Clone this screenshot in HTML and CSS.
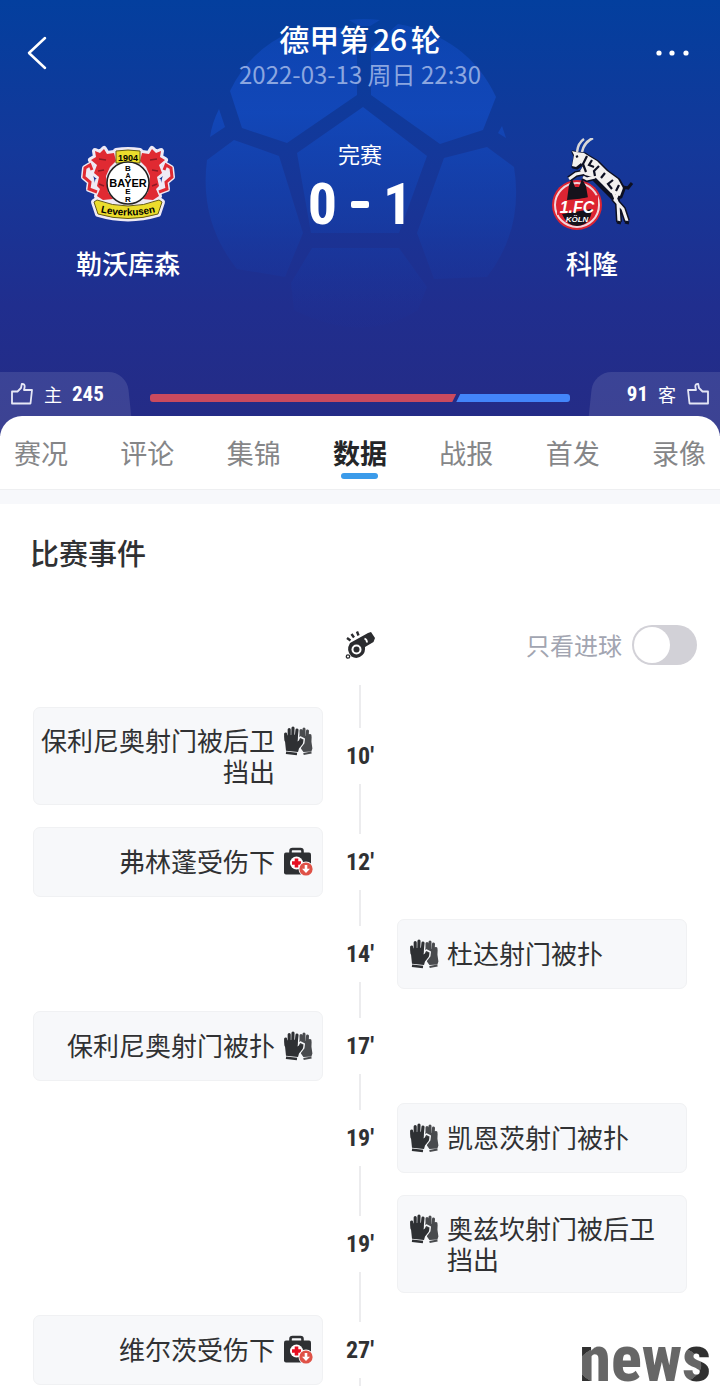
FILE: index.html
```html
<!DOCTYPE html>
<html lang="zh-CN">
<head>
    <meta charset="UTF-8">
    <meta name="viewport" content="width=device-width, initial-scale=1.0">
    <title>勒沃库森 0-1 科隆</title>
    <link rel="stylesheet" href="styles.css">
</head>
<body>
    <!-- 图标定义 -->
    <svg class="defs" aria-hidden="true">
        <symbol id="gloves" viewBox="0 0 30 30">
            <g fill="none" stroke="#494b4e" stroke-linecap="round" stroke-width="3">
                <path d="M18 14V5M21 14V3.500M24 14l.5-8.500M26.500 17l.5-7"/>
            </g>
            <path fill="#494b4e" d="M16.500 10l11.900 1v5l1 7-1 3-8 .5-3.500-5z"/>
            <path fill="none" stroke="#494b4e" stroke-width="2.200" d="M20.500 28.500l8-1.500"/>
            <path fill="none" stroke="#f7f8fa" stroke-width="1.400" stroke-linejoin="round" d="M15.800 13l1.500-1.500 4 2-.5 4-3.500 4.500-.5 3"/>
            <g fill="none" stroke="#2e3033" stroke-linecap="round" stroke-width="3.100">
                <path d="M3 15L2.600 8.500M6.200 14V4M9.700 14l.3-11.500M13 14l1-9.500M13.500 20l5-4.500"/>
            </g>
            <path fill="#2e3033" d="M1.400 10l13.200-1v7l2.400-2 3 2-.4 2.500-3.600 4.500-1 3.500-12-1.200z"/>
            <path fill="none" stroke="#2e3033" stroke-width="2.400" d="M3 27.200l11 1.300"/>
        </symbol>
        <symbol id="injury" viewBox="0 0 30 30">
            <path fill="none" stroke="#2e3033" stroke-width="2.600" d="M7.500 7V4.500q0-2 2-2h8q2 0 2 2V7"/>
            <rect x="1" y="6" width="27" height="22" rx="2" fill="#2e3033"/>
            <circle cx="13.500" cy="16.500" r="6.500" fill="#fff"/>
            <path stroke="#e60f22" stroke-width="3.600" d="M13.500 12v9M9 16.500h9"/>
            <circle cx="23" cy="22.500" r="7.500" fill="#f7f8fa"/>
            <circle cx="23" cy="22.500" r="6.600" fill="#df5247"/>
            <path fill="#fff" d="M21.700 18.500h2.600v3.700h2.700L23 26.500l-4-4.300h2.700z"/>
        </symbol>
        <symbol id="thumb" viewBox="0 0 24 24">
            <path fill="none" stroke="#e4e6f5" stroke-width="1.800" stroke-linejoin="round" d="M2 9.500h5.500L11 6l.8-4q3-.3 2.900 2.700L14 8h8l-1.500 13.500H2z"/>
        </symbol>
    </svg>

    <header class="match">
        <svg class="ball" viewBox="0 0 320 320" aria-hidden="true">
            <defs>
                <linearGradient id="ballFill" gradientUnits="userSpaceOnUse" x1="0" y1="20" x2="0" y2="330">
                    <stop offset="0" stop-color="#124dc6" stop-opacity=".45"/>
                    <stop offset=".3" stop-color="#124abf" stop-opacity=".8"/>
                    <stop offset=".65" stop-color="#1540ac" stop-opacity=".55"/>
                    <stop offset="1" stop-color="#1c3098" stop-opacity=".1"/>
                </linearGradient>
            </defs>
            <g fill="url(#ballFill)" transform="translate(-201 -16)">
                <path d="M349 20q15-2 31 0l-10 6h-11z"/>
                <path d="M230 91q20-42 63-60l50-3 14 20v47l-70 48-45-15z"/>
                <path d="M371 95V48l27-24q70 13 98 73l-13 33-43 14z"/>
                <path d="M363 107l64 49-28 77h-88l-14-80z"/>
                <path d="M234 140l45 16 24 77-18 44-48-8q-38-47-30-109z"/>
                <path d="M487 147l27 20q10 62-27 110l-53 2-17-46 27-75z"/>
                <path d="M312 248h87l28 39-9 23q-55 35-124 0l-3-27z"/>
                <path d="M219 109l6 18-15 10q2-14 9-28zM502 126l4 12-8-5z"/>
            </g>
        </svg>

        <div class="topbar">
            <button class="icon-btn" aria-label="返回">
                <svg width="22" height="34" viewBox="0 0 22 34"><path d="M19 2L3 17l16 15" fill="none" stroke="#fff" stroke-width="2.500" stroke-linecap="round" stroke-linejoin="round"/></svg>
            </button>
            <div class="round">
                <h1>德甲第26轮</h1>
                <p>2022-03-13 周日 22:30</p>
            </div>
            <button class="icon-btn more" aria-label="更多">
                <svg width="38" height="8" viewBox="0 0 38 8" fill="#fff"><circle cx="3" cy="4" r="2.600"/><circle cx="16" cy="4" r="2.600"/><circle cx="30" cy="4" r="2.600"/></svg>
            </button>
        </div>

        <div class="teams">
            <div class="team">
                <svg width="96" height="92" viewBox="0 0 96 92" aria-hidden="true">
                    <defs>
                        <path id="lion" d="M34 15l-7 1-3-5-4 4-5-2 1 6-5 3 6 5-3 8 5 4-2 9 3 3-3 7 6 4 10-1-5-7-1-8-1-8 4-9 6-6z"/>
                        <path id="tail" d="M17 54l-8-3 1-7-6-5 1-9 5-3 2 5"/>
                        <path id="ribbon" d="M17 62q31 12 62 0l3 2-4 12q-30 9-60 0l-4-12z"/>
                        <path id="ribbonLine" d="M16 73q32 9 64 0"/>
                    </defs>
                    <!-- 白色描边 -->
                    <g fill="#efeaf5" stroke="#efeaf5" stroke-width="6" stroke-linejoin="round">
                        <use href="#lion"/>
                        <use href="#lion" transform="translate(96 0) scale(-1 1)"/>
                        <use href="#tail"/>
                        <use href="#tail" transform="translate(96 0) scale(-1 1)"/>
                        <use href="#ribbon"/>
                        <path d="M36 13q12-2 24 0v50H36z"/>
                    </g>
                    <g fill="#e02a32">
                        <use href="#lion"/>
                        <use href="#lion" transform="translate(96 0) scale(-1 1)"/>
                    </g>
                    <g fill="none" stroke="#e02a32" stroke-width="3">
                        <use href="#tail"/>
                        <use href="#tail" transform="translate(96 0) scale(-1 1)"/>
                    </g>
                    <path d="M19 21l7 1M18 33l6-1M19 46l5 2M77 21l-7 1M78 33l-6-1M77 46l-5 2" stroke="#8e1a24" stroke-width="1.500"/>
                    <path d="M36 13q12-2 24 0v12H36z" fill="#ecdd2c" stroke="#665c13"/>
                    <use href="#ribbon" fill="#ecdd2c" stroke="#665c13"/>
                    <circle cx="48" cy="45" r="21" fill="#fff" stroke="#222" stroke-width="1.500"/>
                    <g class="crest-text">
                        <text x="48" y="23" font-size="9">1904</text>
                        <text x="48" y="33" font-size="8">B</text>
                        <text x="48" y="40" font-size="7">A</text>
                        <text x="48" y="49" font-size="11">BAYER</text>
                        <text x="48" y="56" font-size="8">E</text>
                        <text x="48" y="64" font-size="8">R</text>
                        <text font-size="10"><textPath href="#ribbonLine" startOffset="50%">Leverkusen</textPath></text>
                    </g>
                </svg>
                <h2>勒沃库森</h2>
            </div>
            <div class="result">
                <p>完赛</p>
                <div class="score"><span>0</span><span class="dash"></span><span>1</span></div>
            </div>
            <div class="team">
                <svg width="84" height="92" viewBox="0 0 84 92" aria-hidden="true">
                    <defs>
                        <path id="goatBody" d="M26 14l-4-1 2 4-2 11 4 1 5-4 2 3-3 5 5 4 11 3 6 6 9 9 9 3 3-8-5-9-11-8-10-10-10-6-3-2z"/>
                        <path id="goatLegs" d="M36 34l-10 2-7 5M45 39l-8 2-4-2M69 53l-4 9 8 9 4 12M62 52l6 14 1 18"/>
                    </defs>
                    <circle cx="27" cy="67" r="25" fill="#dd2432"/>
                    <circle cx="27" cy="67" r="22" fill="none" stroke="#f2d5dc" stroke-width="2"/>
                    <path d="M17 62l2-15 3-6 3 8h4l3-8 4 7 2 12zM12 76l30-5q-1 16-15 17-10 0-15-12z" fill="#15121b"/>
                    <path d="M7 66l41-9v11L7 77z" fill="#dd2432"/>
                    <g fill="#0d1022" stroke="#0d1022" stroke-width="3" stroke-linejoin="round">
                        <use href="#goatBody" x="1" y="1"/>
                        <path d="M44 42l15 4 11 12-3 7z"/>
                    </g>
                    <use href="#goatLegs" fill="none" stroke="#0d1022" stroke-width="6"/>
                    <use href="#goatBody" fill="#f3f1ef"/>
                    <use href="#goatLegs" fill="none" stroke="#f3f1ef" stroke-width="3"/>
                    <path d="M27 14Q28 5 34 1M32 14Q34 4 43 0" fill="none" stroke="#d9d7d7" stroke-width="2.500"/>
                    <path d="M37 18l-4 8 3 8M42 22l-3 5 5 2M49 28l-5 5 1 5M55 35l-4 5M63 42l-5 4 4 5M69 47l-3 6M28 18l-2 1" fill="none" stroke="#0d1022" stroke-width="2.200"/>
                    <path d="M73 49l5 1 4-5" fill="none" stroke="#0d1022" stroke-width="3"/>
                    <path d="M67 84l4 1M75 84l4 1" stroke="#0d1022" stroke-width="3"/>
                    <g class="koln-text">
                        <text x="27" y="75" font-size="16">1.FC</text>
                        <text x="27" y="84" font-size="8">KÖLN</text>
                    </g>
                </svg>
                <h2>科隆</h2>
            </div>
        </div>

        <div class="votes">
            <button class="vote home">
                <svg width="24" height="24"><use href="#thumb"/></svg>
                <span>主</span><b>245</b>
            </button>
            <div class="vote-bar">
                <div class="bar-home" style="flex-grow: 245"></div>
                <div class="bar-away" style="flex-grow: 91"></div>
            </div>
            <button class="vote away">
                <b>91</b><span>客</span>
                <svg class="flip" width="24" height="24"><use href="#thumb"/></svg>
            </button>
        </div>
    </header>

    <nav class="tabs">
        <a href="#">赛况</a>
        <a href="#">评论</a>
        <a href="#">集锦</a>
        <a href="#" class="active">数据</a>
        <a href="#">战报</a>
        <a href="#">首发</a>
        <a href="#">录像</a>
    </nav>

    <main class="events">
        <h2>比赛事件</h2>
        <div class="events-head">
            <svg class="whistle" width="30" height="30" viewBox="0 0 30 30" aria-hidden="true">
                <path d="M5 13L23 3l3-1 4 6-1.500 4-8.500 5q.5 5-2.500 8-5 5-11 1.500-6-6-1.500-13.500z" fill="#2b2c2f"/>
                <circle cx="11.500" cy="19.500" r="5" fill="#fff"/>
                <circle cx="11.500" cy="19.500" r="3" fill="#2b2c2f"/>
                <path d="M19.500 8.500q2.500 1 2.500 4" fill="none" stroke="#fff" stroke-width="1.800"/>
                <circle cx="3" cy="26.500" r="1.700" fill="#fff" stroke="#2b2c2f" stroke-width="1.300"/>
                <path d="M2 8l3.500 2.500M6.500 4l2.500 3.500M12 1.500l1.500 4" stroke="#2b2c2f" stroke-width="2.400"/>
            </svg>
            <label class="only-goals">只看进球 <input type="checkbox" role="switch"></label>
        </div>

        <ol class="timeline">
            <li class="home">
                <div class="card"><div class="event"><svg><use href="#gloves"/></svg><p>保利尼奥射门被后卫挡出</p></div></div>
                <time>10′</time>
            </li>
            <li class="home">
                <div class="card"><div class="event"><svg><use href="#injury"/></svg><p>弗林蓬受伤下</p></div></div>
                <time>12′</time>
            </li>
            <li class="away">
                <time>14′</time>
                <div class="card"><div class="event"><svg><use href="#gloves"/></svg><p>杜达射门被扑</p></div></div>
            </li>
            <li class="home">
                <div class="card"><div class="event"><svg><use href="#gloves"/></svg><p>保利尼奥射门被扑</p></div></div>
                <time>17′</time>
            </li>
            <li class="away">
                <time>19′</time>
                <div class="card"><div class="event"><svg><use href="#gloves"/></svg><p>凯恩茨射门被扑</p></div></div>
            </li>
            <li class="away">
                <time>19′</time>
                <div class="card"><div class="event"><svg><use href="#gloves"/></svg><p>奥兹坎射门被后卫挡出</p></div></div>
            </li>
            <li class="home">
                <div class="card"><div class="event"><svg><use href="#injury"/></svg><p>维尔茨受伤下</p></div></div>
                <time>27′</time>
            </li>
        </ol>
    </main>

    <div class="watermark">news</div>
</body>
</html>
```

FILE: styles.css
```css
* {
    box-sizing: border-box;
}
body {
    position: relative;
    margin: 0;
    background-color: #fff;
    color: #303133;
    font-family: "Noto Sans CJK SC", sans-serif;
    text-autospace: normal;
}
h1, h2, p, ol {
    margin: 0;
    padding: 0;
}
button {
    border: none;
    padding: 0;
    background: none;
    color: inherit;
    font: inherit;
    cursor: pointer;
}
svg {
    display: block;
    flex: none;
}
.defs {
    position: absolute;
    width: 0;
    height: 0;
}

/* 比分头部 */
.match {
    position: relative;
    overflow: hidden;
    padding: 20px 0;
    background: linear-gradient(#033f9e, #14389a 35%, #202e8e 70%, #252b85);
    color: #fff;
}
.ball {
    position: absolute;
    top: 16px;
    left: 50%;
    width: 320px;
    height: 320px;
    margin-left: -159px;
}
.topbar {
    position: relative;
    display: flex;
    justify-content: space-between;
    padding: 0 26px;
}
.icon-btn {
    display: flex;
    align-items: center;
    width: 40px;
    height: 66px;
}
.icon-btn.more {
    justify-content: flex-end;
}
.round {
    text-align: center;
}
.round h1 {
    font-size: 30px;
    font-weight: 500;
    line-height: 36px;
}
.round p {
    color: #8ba6e0;
    font-size: 24px;
    line-height: 36px;
}
.teams {
    position: relative;
    display: flex;
    justify-content: space-between;
    margin: 46px 24px 92px;
}
.team {
    display: flex;
    flex-direction: column;
    align-items: center;
    width: 208px;
}
.team h2 {
    margin-top: 16px;
    font-size: 26px;
    font-weight: 500;
    line-height: 34px;
}
.crest-text, .koln-text {
    font-family: "Liberation Sans", sans-serif;
    font-weight: bold;
    text-anchor: middle;
}
.koln-text {
    fill: #fff;
    font-style: italic;
}
.result {
    text-align: center;
}
.result p {
    font-size: 22px;
    line-height: 30px;
}
.score {
    display: flex;
    justify-content: center;
    align-items: center;
    gap: 14px;
    margin-top: 11px;
    font-family: "Roboto Condensed", "Liberation Sans Narrow", sans-serif;
    font-size: 58px;
    font-weight: bold;
    line-height: 50px;
}
.dash {
    width: 18px;
    height: 7px;
    border-radius: 2px;
    background-color: #fff;
}

/* 支持率 */
.votes {
    display: flex;
    justify-content: space-between;
    align-items: center;
    height: 44px;
}
.vote {
    position: relative;
    display: flex;
    align-items: center;
    gap: 10px;
    width: 132px;
    height: 44px;
    padding: 0 10px;
    font-size: 18px;
}
.vote.away {
    justify-content: flex-end;
}
.vote::before {
    content: "";
    position: absolute;
    top: 0;
    right: 2px;
    bottom: -20px;
    left: -20px;
    border-radius: 0 18px 0 0;
    background-color: rgba(255, 255, 255, 0.11);
    transform: skewX(6deg);
}
.vote.away::before {
    right: -20px;
    left: 2px;
    border-radius: 18px 0 0 0;
    transform: skewX(-6deg);
}
.vote b {
    font-family: "Roboto Condensed", "Liberation Sans Narrow", sans-serif;
    font-size: 21px;
}
.flip {
    transform: scaleX(-1);
}
.vote-bar {
    display: flex;
    flex: 1;
    margin: 8px 18px 0;
}
.bar-home, .bar-away {
    height: 8px;
}
.bar-home {
    border-radius: 3px 0 0 3px;
    background-color: #ca4a5e;
    clip-path: polygon(0 0, 100% 0, calc(100% - 4px) 100%, 0 100%);
}
.bar-away {
    border-radius: 0 3px 3px 0;
    background-color: #4385fa;
    clip-path: polygon(4px 0, 100% 0, 100% 100%, 0 100%);
}

/* 导航 */
.tabs {
    position: relative;
    display: flex;
    justify-content: space-between;
    margin-top: -20px;
    padding: 16px 14px 10px;
    border-bottom: 1px solid #eeeff1;
    border-radius: 22px 22px 0 0;
    background-color: #fff;
}
.tabs a {
    display: flex;
    flex-direction: column;
    align-items: center;
    color: #858688;
    font-size: 27px;
    line-height: 41px;
    text-decoration: none;
}
.tabs a::after {
    content: "";
    width: 37px;
    height: 6px;
    border-radius: 3px;
}
.tabs .active {
    color: #252628;
    font-weight: bold;
}
.tabs .active::after {
    background-color: #3b9bea;
}

/* 比赛事件 */
.events {
    padding-top: 28px;
    border-top: 14px solid #f7f8fb;
}
.events h2 {
    padding: 0 30px;
    font-size: 29px;
    font-weight: 500;
    line-height: 40px;
}
.events-head {
    display: grid;
    grid-template-columns: 1fr 30px 1fr;
    align-items: center;
    height: 40px;
    margin: 53px 23px 20px;
}
.whistle {
    grid-column: 2;
}
.only-goals {
    display: flex;
    align-items: center;
    justify-content: flex-end;
    gap: 10px;
    color: #a2a5b1;
    font-size: 24px;
    line-height: 36px;
}
.only-goals input {
    appearance: none;
    width: 65px;
    height: 40px;
    margin: 0;
    padding: 2px;
    border-radius: 20px;
    background-color: #d2d1d7;
}
.only-goals input::before {
    content: "";
    display: block;
    width: 36px;
    height: 36px;
    border-radius: 50%;
    background-color: #fff;
}
.only-goals input:checked {
    background-color: #3b9bea;
}
.only-goals input:checked::before {
    margin-left: auto;
}
.timeline {
    padding: 0 33px;
    list-style: none;
}
.timeline li {
    display: grid;
    grid-template-columns: 1fr 74px 1fr;
}
.timeline .card {
    display: flex;
    align-items: center;
    min-height: 70px;
    margin: 11px 0;
    padding: 16px 9px 18px;
    border: 1px solid #f0f1f3;
    border-radius: 7px;
    background-color: #f7f8fa;
}
.timeline .away .card {
    padding-left: 11px;
}
.timeline .home .card {
    justify-content: flex-end;
    padding-left: 5px;
}
.event {
    display: flex;
    gap: 8px;
}
.home .event {
    flex-direction: row-reverse;
    text-align: right;
}
.event svg {
    width: 30px;
    height: 33px;
}
.event p {
    font-size: 26px;
    line-height: 31px;
}
.timeline time {
    display: flex;
    flex-direction: column;
    align-items: center;
    grid-column: 2;
    font-family: "Roboto Condensed", "Liberation Sans Narrow", sans-serif;
    font-size: 24px;
    font-weight: bold;
    line-height: 56px;
}
.timeline time::before,
.timeline time::after {
    content: "";
    flex: 1;
    width: 2px;
    background-color: #ececee;
}
.timeline li:first-child time {
    margin-top: -11px;
}
.timeline li:first-child time::before {
    flex-basis: 11px;
}
.timeline li:first-child {
    padding-top: 11px;
}
.timeline li:last-child .card {
    margin-bottom: 2px;
}
.timeline li:last-child time::before {
    flex-basis: 9px;
}

.watermark {
    position: absolute;
    right: 8px;
    bottom: 0;
    padding: 0 1px;
    background: radial-gradient(ellipse 62px 26px at 46% 60%, #666 99%, #303030);
    background-clip: text;
    color: transparent;
    font-family: "Roboto Condensed", "Liberation Sans", sans-serif;
    font-size: 64px;
    font-weight: 800;
    line-height: 54px;
}
```
